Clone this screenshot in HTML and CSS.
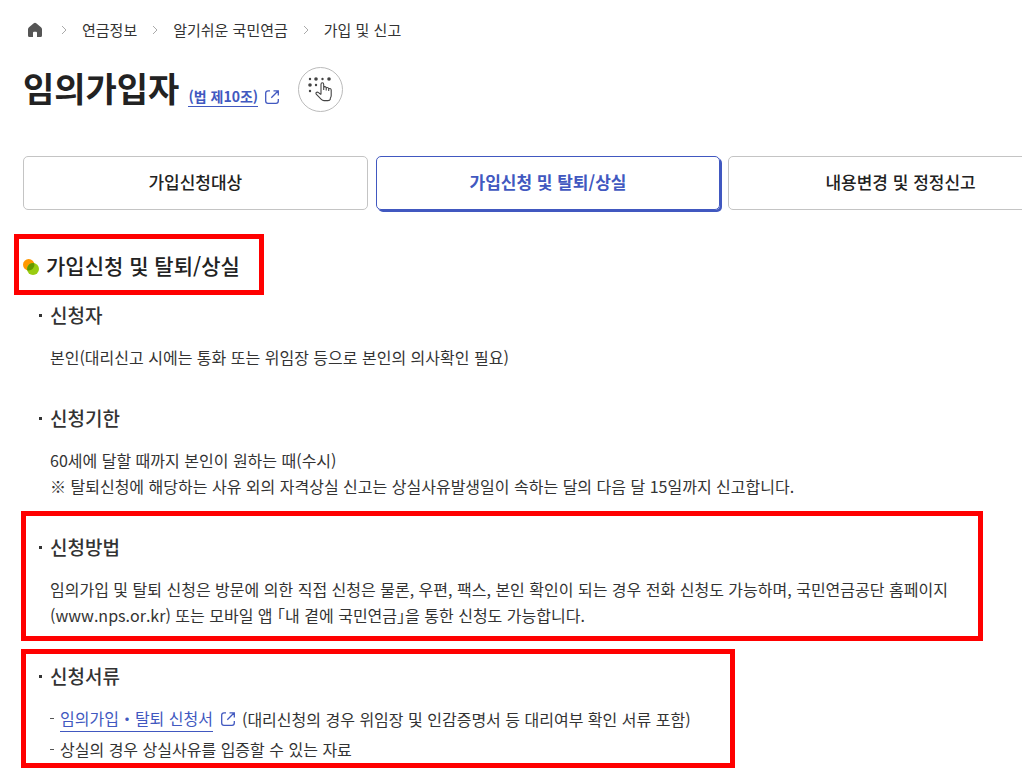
FILE: index.html
```html
<!DOCTYPE html>
<html lang="ko">

<head>
    <meta charset="utf-8">
    <meta name="viewport" content="width=device-width, initial-scale=1.0">
    <title>임의가입자</title>
    <link rel="stylesheet" href="styles.css">
</head>

<body>

    <header>
        <nav class="breadcrumb">
            <a href="#" class="home" aria-label="홈">
                <svg width="16" height="16" viewBox="0 0 16 16"><path d="M8 0.8 Q8.6 0.8 9.2 1.3 L14 5.2 Q15 6 15 7.2 V13.5 Q15 15 13.6 15 H10 V10.7 Q10 9.7 9 9.7 H7 Q6 9.7 6 10.7 V15 H2.4 Q1 15 1 13.5 V7.2 Q1 6 2 5.2 L6.8 1.3 Q7.4 0.8 8 0.8 Z" fill="#555"/></svg>
            </a>
            <svg class="arrow" width="6" height="10" viewBox="0 0 6 10"><path d="M1 1 L5 5 L1 9"/></svg>
            <a href="#">연금정보</a>
            <svg class="arrow" width="6" height="10" viewBox="0 0 6 10"><path d="M1 1 L5 5 L1 9"/></svg>
            <a href="#">알기쉬운 국민연금</a>
            <svg class="arrow" width="6" height="10" viewBox="0 0 6 10"><path d="M1 1 L5 5 L1 9"/></svg>
            <a href="#">가입 및 신고</a>
        </nav>

        <div class="title">
            <h1>임의가입자</h1>
            <a href="#" class="law"><span class="link">(법 제10조)</span><svg class="external" width="16" height="16" viewBox="0 0 16 16"><path d="M6 1.8 H4 Q1.7 1.8 1.7 4 V12 Q1.7 14.3 4 14.3 H12 Q14.3 14.3 14.3 12 V10 M9.5 1.8 H14.3 V6.5 M14 2 L7.3 8.7"/></svg></a>
            <button type="button" class="braille" aria-label="점자">
                <svg width="26" height="28" viewBox="0 0 26 28">
                    <g fill="#444">
                        <circle cx="3" cy="4" r="1.2"/><circle cx="9" cy="4" r="1.8"/><circle cx="15.5" cy="4" r="1.2"/><circle cx="22" cy="4" r="1.8"/>
                        <circle cx="3" cy="10" r="1.8"/><circle cx="9" cy="10" r="1.2"/><circle cx="3" cy="16" r="1.2"/>
                    </g>
                    <path d="M14 19.5 V9.4 Q14 7.8 15.3 7.8 Q16.7 7.8 16.7 9.4 V15 M16.7 15 V12.6 Q16.9 11.5 18 11.6 Q19.2 11.8 19.2 13 V15.5 M19.2 13.3 Q19.5 12.3 20.5 12.5 Q21.7 12.7 21.7 14 V16 M21.7 14.3 Q22.2 13.3 23 13.5 Q24.2 13.8 24.2 15 V20.5 Q24.2 22 23.3 23.3 V24.2 Q22.8 25.6 21 25.6 H17 Q15.5 25.6 14.3 24.3 L9.2 19.2 Q8.5 18.2 9.3 17.5 Q10.3 16.8 11.5 17.6 L14 19.5" fill="#fff" stroke="#444" stroke-width="1.1" stroke-linejoin="round"/>
                </svg>
            </button>
        </div>
    </header>

    <nav class="tabs">
        <a href="#">가입신청대상</a>
        <a href="#" class="active">가입신청 및 탈퇴/상실</a>
        <a href="#">내용변경 및 정정신고</a>
    </nav>

    <main>
        <h2 class="marked">
            <svg width="16" height="16" viewBox="0 0 16 16"><circle cx="5.7" cy="5.7" r="5.7" fill="#ff9800"/><circle cx="10" cy="10" r="6" fill="#9c1"/><path d="M11.3 4.2 A6 6 0 0 0 4.2 11.2 A5.7 5.7 0 0 0 11.3 4.2 Z" fill="#690"/></svg>
            가입신청 및 탈퇴/상실
        </h2>

        <section>
            <h3>신청자</h3>
            <p>본인(대리신고 시에는 통화 또는 위임장 등으로 본인의 의사확인 필요)</p>
        </section>

        <section>
            <h3>신청기한</h3>
            <p>60세에 달할 때까지 본인이 원하는 때(수시)</p>
            <p>※ 탈퇴신청에 해당하는 사유 외의 자격상실 신고는 상실사유발생일이 속하는 달의 다음 달 15일까지 신고합니다.</p>
        </section>

        <section class="marked method">
            <h3>신청방법</h3>
            <p>임의가입 및 탈퇴 신청은 방문에 의한 직접 신청은 물론, 우편, 팩스, 본인 확인이 되는 경우 전화 신청도 가능하며, 국민연금공단 홈페이지(www.nps.or.kr) 또는 모바일 앱 ｢내 곁에 국민연금｣을 통한 신청도 가능합니다.</p>
        </section>

        <section class="marked papers">
            <h3>신청서류</h3>
            <ul>
                <li><a href="#"><span class="link">임의가입・탈퇴 신청서</span><svg class="external" width="16" height="16" viewBox="0 0 16 16"><path d="M6 1.8 H4 Q1.7 1.8 1.7 4 V12 Q1.7 14.3 4 14.3 H12 Q14.3 14.3 14.3 12 V10 M9.5 1.8 H14.3 V6.5 M14 2 L7.3 8.7"/></svg></a> (대리신청의 경우 위임장 및 인감증명서 등 대리여부 확인 서류 포함)</li>
                <li>상실의 경우 상실사유를 입증할 수 있는 자료</li>
            </ul>
        </section>
    </main>

</body></html>
```
FILE: styles.css
```css
* {
    margin: 0;
    padding: 0;
    box-sizing: border-box;
}

body {
    padding: 18px 0 5px 23px;
    font-family: "Noto Sans CJK KR", sans-serif;
    font-size: 16px;
    line-height: 26px;
    color: #333;
    background-color: #fff;
    overflow-x: hidden;
}

a {
    color: inherit;
    text-decoration: none;
}

svg {
    flex: none;
}

.breadcrumb {
    display: flex;
    align-items: center;
    gap: 15px;
    padding-left: 4px;
    font-size: 15px;
    line-height: 24px;
}

.home {
    display: flex;
}

.home + .arrow {
    margin-left: 3px;
}

.arrow {
    fill: none;
    stroke: #aaa;
}

.title {
    display: flex;
    align-items: center;
    margin-top: 25px;
}

h1 {
    margin-bottom: 3px;
    font-size: 34px;
    line-height: 42px;
    font-weight: bold;
    color: #222;
}

.law {
    display: flex;
    align-items: center;
    margin: 14px 18px 0 9px;
    font-size: 14px;
    line-height: 20px;
    font-weight: bold;
    color: #4158c0;
}

.link {
    border-bottom: 1px solid #4158c0;
}

.external {
    margin-left: 6px;
    fill: none;
    stroke: #4158c0;
    stroke-width: 1.3;
}

.braille {
    display: flex;
    align-items: center;
    justify-content: center;
    width: 45px;
    height: 45px;
    padding: 0 2px 2px 0;
    border: 1px solid #bbb;
    border-radius: 50%;
    background-color: #fff;
    cursor: pointer;
}

.tabs {
    display: flex;
    gap: 8px;
    margin-top: 44px;
}

.tabs a {
    flex: 0 0 34.5%;
    padding-bottom: 2px;
    border: 1px solid #c4c4c4;
    border-radius: 5px;
    font-size: 17px;
    line-height: 50px;
    font-weight: 500;
    text-align: center;
    color: #222;
}

.tabs .active {
    border-color: #4158c0;
    box-shadow: 2px 2px 0 #4158c0;
    font-weight: bold;
    color: #4158c0;
}

main {
    margin-top: 24px;
    padding-right: 39px;
}

/* red frames */
.marked {
    border: 5px solid #f00;
}

h2 {
    display: flex;
    align-items: center;
    gap: 7px;
    width: fit-content;
    margin-left: -9px;
    padding: 11px 19px 10px 4px;
    font-size: 21px;
    line-height: 30px;
    font-weight: 500;
    color: #222;
}

h2 svg {
    margin-top: 4px;
}

section {
    margin: 6px 0 34px;
    padding-left: 27px;
}

h3 {
    display: flex;
    align-items: center;
    margin: 0 0 15px -11px;
    font-size: 19px;
    line-height: 28px;
    font-weight: 500;
}

h3::before {
    content: "";
    width: 3px;
    height: 3px;
    margin-right: 8px;
    background-color: #333;
}

section.marked {
    margin: 0 0 8px -2px;
    padding-left: 24px;
}

.method {
    padding-top: 17px;
    padding-bottom: 8px;
}

section.method {
    margin-top: -22px;
}

.papers {
    width: fit-content;
    padding: 8px 39px 1px 0;
}

section.papers {
    margin-bottom: 0;
}

ul {
    display: grid;
    gap: 4px;
    list-style: none;
}

li {
    display: flex;
    align-items: center;
    gap: 6px;
}

li::before {
    content: "";
    width: 4px;
    height: 1px;
    background-color: #555;
}

li a {
    display: flex;
    align-items: center;
    color: #4158c0;
}

li .external {
    margin-left: 7px;
}
```
